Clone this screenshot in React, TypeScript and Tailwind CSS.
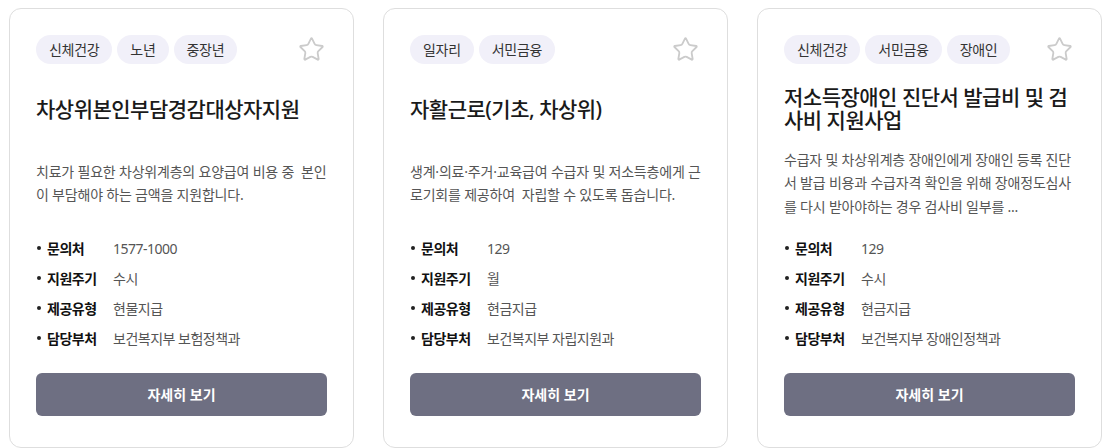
import React from 'react';
import { Star } from 'lucide-react';

type Policy = {
  id: number;
  tags: string[];
  title: string;
  description: string;
  contact: string;
  cycle: string;
  supplyType: string;
  department: string;
};

const policies: Policy[] = [
  {
    id: 1,
    tags: ['신체건강', '노년', '중장년'],
    title: '차상위본인부담경감대상자지원',
    description: '치료가 필요한 차상위계층의 요양급여 비용 중  본인이 부담해야 하는 금액을 지원합니다.',
    contact: '1577-1000',
    cycle: '수시',
    supplyType: '현물지급',
    department: '보건복지부 보험정책과',
  },
  {
    id: 2,
    tags: ['일자리', '서민금융'],
    title: '자활근로(기초, 차상위)',
    description: '생계·의료·주거·교육급여 수급자 및 저소득층에게 근로기회를 제공하여  자립할 수 있도록 돕습니다.',
    contact: '129',
    cycle: '월',
    supplyType: '현금지급',
    department: '보건복지부 자립지원과',
  },
  {
    id: 3,
    tags: ['신체건강', '서민금융', '장애인'],
    title: '저소득장애인 진단서 발급비 및 검사비 지원사업',
    description: '수급자 및 차상위계층 장애인에게 장애인 등록 진단서 발급 비용과 수급자격 확인을 위해 장애정도심사를 다시 받아야하는 경우 검사비 일부를 ...',
    contact: '129',
    cycle: '수시',
    supplyType: '현금지급',
    department: '보건복지부 장애인정책과',
  },
];

function InfoRow({ label, value }: { label: string; value: string }) {
  return (
    <li className="flex h-[30px] items-center text-[14px] tracking-[-0.5px]">
      <span className="ml-[1px] mr-[6px] h-[4px] w-[4px] rounded-full bg-[#222]" />
      <span className="w-[66px] font-bold text-[#111]">{label}</span>
      <span className="text-[#555]">{value}</span>
    </li>
  );
}

function PolicyCard({ policy }: { policy: Policy }) {
  return (
    <div className="flex w-[345px] flex-col rounded-[12px] border border-[#dedede] bg-white px-[26px] pt-[26px] pb-[26px]">
      {/* tags + favourite */}
      <div className="flex h-[29px] items-center justify-between">
        <div className="flex gap-[5px]">
          {policy.tags.map((tag) => (
            <span
              key={tag}
              className="flex h-[29px] items-center rounded-full bg-[#f1f0f9] px-[13px] text-[14px] tracking-[-0.3px] text-[#333]"
            >
              {tag}
            </span>
          ))}
        </div>
        <Star size={27} strokeWidth={1.6} className="mr-[2px] text-[#cbcbcb]" />
      </div>

      <div className="mt-[17px] flex h-[56px] items-center">
        <h2 className="text-[21px] font-medium leading-[23px] tracking-[-0.5px] text-[#1a1a1a]">
          {policy.title}
        </h2>
      </div>

      <div className="mt-[11px] flex h-[70px] items-center">
        <p className="whitespace-pre-wrap text-[14px] leading-[23.5px] tracking-[-0.2px] text-[#555]">
          {policy.description}
        </p>
      </div>

      <ul className="mt-[15px]">
        <InfoRow label="문의처" value={policy.contact} />
        <InfoRow label="지원주기" value={policy.cycle} />
        <InfoRow label="제공유형" value={policy.supplyType} />
        <InfoRow label="담당부처" value={policy.department} />
      </ul>

      <button className="mt-[20px] h-[43px] w-full rounded-[6px] bg-[#6e6f82] text-[14px] font-bold text-white">
        자세히 보기
      </button>
    </div>
  );
}

export default function App() {
  return (
    <div
      className="flex gap-[29px] bg-white pt-[8px] pl-[9px]"
      style={{ fontFamily: '"Noto Sans", "Noto Sans CJK KR", sans-serif', width: 1108, height: 448 }}
    >
      {policies.map((policy) => (
        <PolicyCard key={policy.id} policy={policy} />
      ))}
    </div>
  );
}
